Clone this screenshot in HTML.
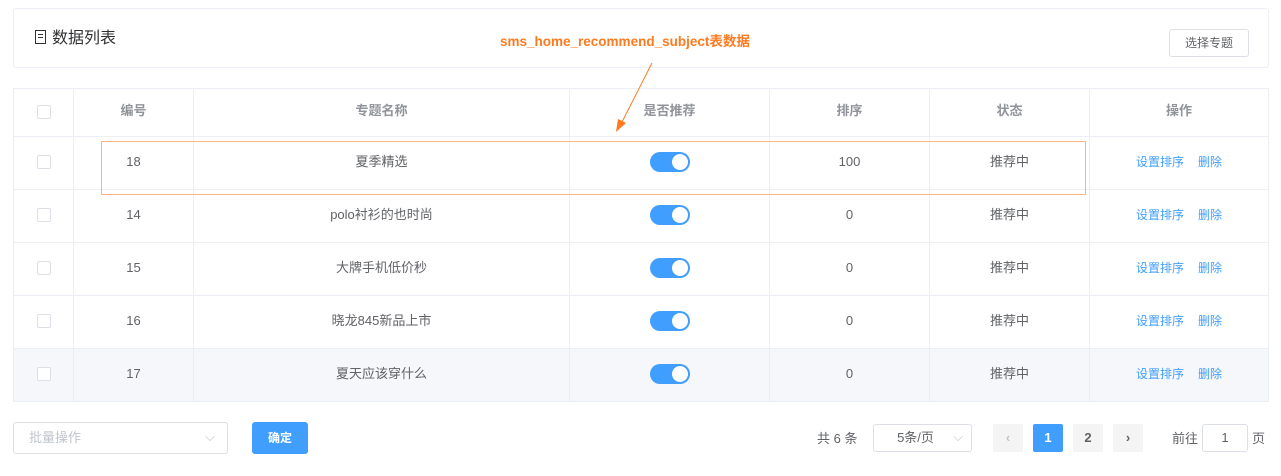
<!DOCTYPE html><html><head><meta charset="utf-8"><style>
body{margin:0;width:1281px;height:476px;background:#fff;font-family:"Liberation Sans","Noto Sans CJK SC",sans-serif;font-size:13px;color:#606266;position:relative;overflow:hidden}
.a{position:absolute}
.card{left:13px;top:8px;width:1254px;height:58px;border:1px solid #ebeef5;border-radius:3px}
table{position:absolute;left:13px;top:88px;width:1256px;border-collapse:collapse;border:1px solid #ebeef5}
td,th{border:1px solid #ebeef5;text-align:center;padding:0 0 3px 0;font-size:13px;line-height:16px}
th{height:44px;color:#909399;font-weight:bold}
td{height:49px;color:#606266}
.cb{display:inline-block;width:12px;height:12px;border:1px solid #dcdfe6;border-radius:2px;background:#fff;vertical-align:middle}
.sw{display:inline-block;width:40px;height:20px;border-radius:10px;background:#409eff;position:relative;vertical-align:middle}
.sw:after{content:"";position:absolute;right:2px;top:2px;width:16px;height:16px;border-radius:50%;background:#fff}
.lk{color:#409eff;font-size:12px;margin:0 7px}
.btn{border:1px solid #dcdfe6;border-radius:3px;background:#fff;text-align:center;box-sizing:border-box}
.pg{width:30px;height:28px;line-height:28px;background:#f4f4f5;text-align:center;font-weight:bold;border-radius:2px;top:424px;color:#606266}
</style></head><body>
<div class="a card"></div>
<div class="a" style="left:35px;top:29px;font-size:16px;color:#303133;line-height:20px">
<span style="display:inline-block;width:9px;height:12px;border:1px solid #303133;vertical-align:-1px;margin-right:6px;background:linear-gradient(#303133,#303133) 2px 3px/5px 1px no-repeat,linear-gradient(#303133,#303133) 2px 6px/5px 1px no-repeat"></span>数据列表</div>
<div class="a" style="left:500px;top:33px;color:#ff7a1f;font-weight:bold;font-size:13.5px;line-height:18px">sms_home_recommend_subject表数据</div>
<div class="a btn" style="left:1169px;top:29px;width:80px;height:28px;line-height:26px;font-size:12px;color:#606266">选择专题</div>
<table>
<tr><th style="width:59px"><span class="cb"></span></th><th style="width:119px">编号</th><th style="width:375px">专题名称</th><th style="width:199px">是否推荐</th><th style="width:159px">排序</th><th style="width:159px">状态</th><th>操作</th></tr>
<tr><td><span class="cb"></span></td><td>18</td><td>夏季精选</td><td><span class="sw"></span></td><td>100</td><td>推荐中</td><td><span class="lk">设置排序</span><span class="lk">删除</span></td></tr>
<tr><td><span class="cb"></span></td><td>14</td><td>polo衬衫的也时尚</td><td><span class="sw"></span></td><td>0</td><td>推荐中</td><td><span class="lk">设置排序</span><span class="lk">删除</span></td></tr>
<tr><td><span class="cb"></span></td><td>15</td><td>大牌手机低价秒</td><td><span class="sw"></span></td><td>0</td><td>推荐中</td><td><span class="lk">设置排序</span><span class="lk">删除</span></td></tr>
<tr><td><span class="cb"></span></td><td>16</td><td>晓龙845新品上市</td><td><span class="sw"></span></td><td>0</td><td>推荐中</td><td><span class="lk">设置排序</span><span class="lk">删除</span></td></tr>
<tr style="background:#f5f7fa"><td><span class="cb"></span></td><td>17</td><td>夏天应该穿什么</td><td><span class="sw"></span></td><td>0</td><td>推荐中</td><td><span class="lk">设置排序</span><span class="lk">删除</span></td></tr>
</table>
<div class="a" style="left:101px;top:141px;width:983px;height:52px;border:1.5px solid #ffb380"></div>
<svg class="a" style="left:0;top:0" width="1281" height="476"><line x1="652" y1="63" x2="621" y2="124" stroke="#ff7a1f" stroke-width="1"/><polygon points="616,132 618,119 626,123" fill="#ff7a1f"/></svg>
<div class="a btn" style="left:13px;top:422px;width:215px;height:32px;line-height:30px;text-align:left;padding-left:15px;color:#c0c4cc">批量操作<span style="position:absolute;right:12px;top:-1px;color:#c0c4cc">⌵</span></div>
<div class="a" style="left:252px;top:422px;width:56px;height:32px;line-height:32px;background:#409eff;color:#fff;border-radius:3px;text-align:center;font-size:12px;font-weight:bold">确定</div>
<div class="a" style="left:817px;top:428px">共 6 条</div>
<div class="a btn" style="left:873px;top:424px;width:99px;height:28px;line-height:26px;padding-right:14px;color:#606266">5条/页<span style="position:absolute;right:8px;top:-1px;color:#c0c4cc">⌵</span></div>
<div class="a pg" style="left:993px;color:#c0c4cc">‹</div>
<div class="a pg" style="left:1033px;background:#409eff;color:#fff">1</div>
<div class="a pg" style="left:1073px">2</div>
<div class="a pg" style="left:1113px">›</div>
<div class="a" style="left:1172px;top:428px">前往</div>
<div class="a btn" style="left:1202px;top:424px;width:46px;height:28px;line-height:26px">1</div>
<div class="a" style="left:1252px;top:428px">页</div>
</body></html>
